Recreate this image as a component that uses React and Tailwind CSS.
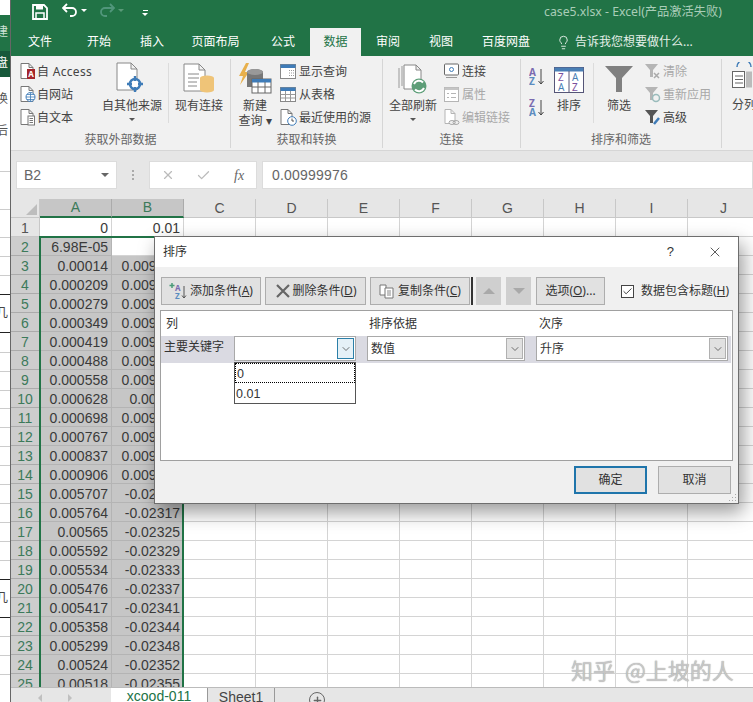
import { ChevronDown, X, Check, Plus, Lightbulb } from 'lucide-react';

const COLS = ['A', 'B', 'C', 'D', 'E', 'F', 'G', 'H', 'I', 'J'];
const COL_A = ['0', '6.98E-05', '0.00014', '0.000209', '0.000279', '0.000349', '0.000419', '0.000488', '0.000558', '0.000628', '0.000698', '0.000767', '0.000837', '0.000906', '0.005707', '0.005764', '0.00565', '0.005592', '0.005534', '0.005476', '0.005417', '0.005358', '0.005299', '0.00524', '0.00518'];
const COL_B = ['0.01', '', '0.009998', '0.009993', '0.009988', '0.009983', '0.009978', '0.009973', '0.009968', '0.00996', '0.009958', '0.009953', '0.009948', '0.009943', '-0.02313', '-0.02317', '-0.02325', '-0.02329', '-0.02333', '-0.02337', '-0.02341', '-0.02344', '-0.02348', '-0.02352', '-0.02355'];

const tabs = [
  ['文件', 'w-[58px]'],
  ['开始', 'w-[60px]'],
  ['插入', 'w-[46px]'],
  ['页面布局', 'w-[81px]'],
  ['公式', 'w-[54px]'],
  ['数据', 'w-[51px]', true],
  ['审阅', 'w-[54px]'],
  ['视图', 'w-[52px]'],
  ['百度网盘', 'w-[78px]'],
];

// lines of the window behind Excel, seen in the strip on the left
const STRIP_ROWS = [
  ['h-[15px]', 'border-[#ccc]'],
  ['h-[38px]', 'border-[#ccc]'],
  ['h-[28px]', 'border-[#ccc]'],
  ['h-[19px]', 'border-[#ccc]'],
  ['h-[19px]', 'border-[#ccc]'],
  ['h-[19px]', 'border-[#222]'],
  ['h-[38px]', 'border-[#222]', '几', 'pt-[12px]'],
  ['h-[20px]', 'border-[#ccc]'],
  ['h-[19px]', 'border-[#ccc]'],
  ['h-[19px]', 'border-[#ccc]'],
  ['h-[18px]', 'border-[#ccc]'],
  ['h-[19px]', 'border-[#ccc]'],
  ['h-[19px]', 'border-[#ccc]'],
  ['h-[19px]', 'border-[#ccc]'],
  ['h-[19px]', 'border-[#ccc]'],
  ['h-[19px]', 'border-[#ccc]'],
  ['h-[19px]', 'border-[#ccc]'],
  ['h-[19px]', 'border-[#ccc]'],
  ['h-[19px]', 'border-[#ccc]'],
  ['h-[19px]', 'border-[#222]'],
  ['h-[38px]', 'border-[#222]', '几', 'pt-[12px]'],
  ['h-[19px]', 'border-[#ccc]'],
  ['h-[19px]', 'border-[#ccc]'],
  ['h-[19px]', 'border-[#ccc]'],
];

const Doc = ({ x = 1, y = 0, w = 12, h = 16, fold = 4, stroke = '#777' }) => (
  <path d={`M${x} ${y}h${w - fold}l${fold} ${fold}v${h - fold}h-${w}zM${x + w - fold} ${y}v${fold}h${fold}`} fill="#fff" stroke={stroke} />
);

const Caret = () => <div className="w-0 h-0 border-x-[3px] border-x-transparent border-t-[3px] border-t-[#555] mt-[5px]" />;

const SmallBtn = ({ icon, label, muted, tight }) => (
  <div className="flex items-center h-[23px] whitespace-nowrap">
    <div className="w-[17px] h-[17px] shrink-0">{icon}</div>
    <span className={`text-[12px] ${tight ? 'ml-0' : 'ml-[2px]'} ${muted ? 'text-[#a8a8a8]' : 'text-[#444]'}`}>{label}</span>
  </div>
);

const BigBtn = ({ icon, lines, caret, width }) => (
  <div className={`flex flex-col items-center shrink-0 ${width}`}>
    <div className="h-[36px] mt-[2px] flex items-center justify-center">{icon}</div>
    {lines.map((l) => (
      <div key={l} className="text-[12px] leading-[15px] text-[#444] whitespace-nowrap">{l}</div>
    ))}
    {caret && <Caret />}
  </div>
);

const Group = ({ width, label, children }) => (
  <div className={`${width} shrink-0 flex flex-col border-r border-[#d6d6d6] my-[3px] h-[89px]`}>
    <div className="h-[73px] flex pt-[1px]">{children}</div>
    <div className="text-center text-[12px] leading-[16px] text-[#666]">{label}</div>
  </div>
);

const icons = {
  access: (
    <svg viewBox="0 0 17 17" className="w-[17px] h-[17px]"><Doc x={1} y={0.5} w={12} h={15} /><rect x="7" y="6" width="8" height="10" fill="#a4262c" /><text x="8.3" y="14" fontSize="8" fill="#fff" fontWeight="700">A</text></svg>
  ),
  web: (
    <svg viewBox="0 0 17 17" className="w-[17px] h-[17px]"><Doc x={1} y={0.5} w={12} h={15} /><circle cx="10.5" cy="11" r="4.5" fill="#fff" stroke="#3f7cb8" /><path d="M6 11h9M10.5 6.5v9M7 8.5h7M7 13.5h7" stroke="#3f7cb8" strokeWidth=".8" /></svg>
  ),
  text: (
    <svg viewBox="0 0 17 17" className="w-[17px] h-[17px]"><Doc x={1} y={0.5} w={12} h={15} /><rect x="8" y="7" width="6.5" height="9" fill="#fff" stroke="#777" /><path d="M9.5 9.5h3.5M9.5 11.5h3.5M9.5 13.5h3.5" stroke="#777" /></svg>
  ),
  other: (
    <svg width="32" height="36" viewBox="0 0 32 36"><Doc x={1} y={1} w={20} h={27} fold={6} stroke="#888" /><circle cx="19" cy="22" r="5" fill="#fff" stroke="#3f7cb8" strokeWidth="2.6" /><path d="M19 14v5M19 25v5M11 22h5M22 22h5" stroke="#3f7cb8" strokeWidth="2.4" /></svg>
  ),
  existing: (
    <svg width="32" height="34" viewBox="0 0 32 34"><Doc x={1} y={1} w={21} h={27} fold={6} stroke="#888" /><path d="M5 11h11M5 15h11M5 19h9M5 23h9" stroke="#888" /><path d="M17 15a7 2.5 0 0 1 14 0v12a7 2.5 0 0 1-14 0z" fill="#efc478" /></svg>
  ),
  newQuery: (
    <svg width="34" height="34" viewBox="0 0 34 34"><path d="M8 0L1 13h4l-3 9 9-13H7l4-9z" fill="#e8b04c" /><path d="M9 9a8 3 0 0 1 16 0v15H9z" fill="#777" /><ellipse cx="17" cy="9" rx="8" ry="3" fill="#999" /><rect x="14" y="16" width="19" height="14" fill="#fff" stroke="#666" /><rect x="14" y="16" width="19" height="3.5" fill="#3f7cb8" /><path d="M14 24h19M20 19v11M27 19v11" stroke="#666" /></svg>
  ),
  showQuery: (
    <svg viewBox="0 0 17 17" className="w-[17px] h-[17px]"><rect x=".5" y="1.5" width="15" height="14" fill="#fff" stroke="#888" /><rect x=".5" y="1.5" width="15" height="3.5" fill="#3f7cb8" /><path d="M9 7.5h5M9 10h5M9 12.5h5" stroke="#999" strokeDasharray="1 1" /></svg>
  ),
  fromTable: (
    <svg viewBox="0 0 17 17" className="w-[17px] h-[17px]"><rect x=".5" y="1.5" width="15" height="14" fill="#fff" stroke="#888" /><rect x=".5" y="1.5" width="15" height="3.5" fill="#3f7cb8" /><path d="M1 8.5h14M1 12h14M5.5 5v10M10.5 5v10" stroke="#999" /></svg>
  ),
  recent: (
    <svg viewBox="0 0 17 17" className="w-[17px] h-[17px]"><Doc x={1} y={0.5} w={11} h={15} /><circle cx="12" cy="12" r="4.3" fill="#fff" stroke="#3f7cb8" /><path d="M12 9.5V12h2" fill="none" stroke="#555" /></svg>
  ),
  refresh: (
    <svg width="32" height="32" viewBox="0 0 32 32"><path d="M2 4v20M5 2v20" stroke="#999" fill="none" /><Doc x={7} y={1} w={17} h={24} fold={5} stroke="#888" /><circle cx="22" cy="22" r="7.5" fill="#5d9e78" /><path d="M17 20a5.5 5.5 0 0 1 9-1.5M27 24a5.5 5.5 0 0 1-9 1.5" stroke="#fff" strokeWidth="2" fill="none" /></svg>
  ),
  conn: (
    <svg viewBox="0 0 17 17" className="w-[17px] h-[17px]"><rect x="1.5" y="1" width="14" height="11" rx="1" fill="#fff" stroke="#666" /><circle cx="8.5" cy="6.5" r="2" fill="none" stroke="#3f7cb8" /><path d="M3 14.5h11" stroke="#999" /></svg>
  ),
  props: (
    <svg viewBox="0 0 17 17" className="w-[17px] h-[17px]"><rect x="1.5" y="1.5" width="14" height="14" fill="#fff" stroke="#b5b5b5" /><rect x="1.5" y="1.5" width="14" height="2.5" fill="#c5c5c5" /><path d="M4 7.5h2M8 7.5h5M4 11.5h2M8 11.5h5" stroke="#b5b5b5" /></svg>
  ),
  link: (
    <svg viewBox="0 0 17 17" className="w-[17px] h-[17px]"><Doc x={2} y={0.5} w={10} h={14} stroke="#b5b5b5" /><ellipse cx="9" cy="13.5" rx="3" ry="2" fill="#f1f1f1" stroke="#aaa" /><ellipse cx="13" cy="13.5" rx="3" ry="2" fill="none" stroke="#aaa" /></svg>
  ),
  az: (
    <svg width="16" height="20" viewBox="0 0 16 20"><text x="0" y="9" fontSize="10" fontWeight="700" fill="#7a6bb0">A</text><text x="0" y="18" fontSize="10" fontWeight="700" fill="#5b8cc0">Z</text><path d="M12 2v15M9.5 14l2.500 3 2.500-3" fill="none" stroke="#444" /></svg>
  ),
  za: (
    <svg width="16" height="20" viewBox="0 0 16 20"><text x="0" y="9" fontSize="10" fontWeight="700" fill="#7a6bb0">Z</text><text x="0" y="18" fontSize="10" fontWeight="700" fill="#5b8cc0">A</text><path d="M12 2v15M9.5 14l2.500 3 2.500-3" fill="none" stroke="#444" /></svg>
  ),
  sort: (
    <svg width="30" height="26" viewBox="0 0 30 26"><rect x=".5" y=".5" width="29" height="25" fill="#fff" stroke="#557" /><rect x=".5" y=".5" width="29" height="4" fill="#4a7fb5" /><path d="M15 4v22" stroke="#557" /><text x="4" y="14" fontSize="10" fill="#7a4f9e">Z</text><text x="4" y="24" fontSize="10" fill="#4a7fb5">A</text><text x="18" y="14" fontSize="10" fill="#4a7fb5">A</text><text x="18" y="24" fontSize="10" fill="#7a4f9e">Z</text></svg>
  ),
  filter: (
    <svg width="28" height="28" viewBox="0 0 28 28"><path d="M0 0h28L17 12v14h-6V12z" fill="#808080" /></svg>
  ),
  clear: (
    <svg viewBox="0 0 17 17" className="w-[17px] h-[17px]"><path d="M1 1h13L9 7v7H6V7z" fill="#b5b5b5" /><path d="M10 10l5 5M15 10l-5 5" stroke="#aaa" strokeWidth="1.5" /></svg>
  ),
  reapply: (
    <svg viewBox="0 0 17 17" className="w-[17px] h-[17px]"><path d="M1 1h13L9 7v7H6V7z" fill="#b5b5b5" /><circle cx="12" cy="12" r="3.5" fill="none" stroke="#9bb" strokeWidth="1.5" /></svg>
  ),
  advanced: (
    <svg viewBox="0 0 17 17" className="w-[17px] h-[17px]"><path d="M1 1h13L9 7v7H6V7z" fill="#555" /><path d="M10 15l5-6" stroke="#3f7cb8" strokeWidth="2.5" /></svg>
  ),
  split: (
    <svg width="20" height="30" viewBox="0 0 20 30"><path d="M5 5a7 7 0 0 1 14 0" fill="none" stroke="#3f7cb8" strokeWidth="1.5" /><rect x=".5" y="9.5" width="12" height="16" fill="#fff" stroke="#666" /><path d="M3 14h8M3 17.500h8M3 21h8" stroke="#666" /><rect x="14" y="9.5" width="6" height="16" fill="#bbb" /></svg>
  ),
};

const LeftStrip = () => (
  <div className="w-[11px] shrink-0 flex flex-col border-r border-[#666] overflow-hidden text-[12px] leading-none">
    <div className="h-[15px] bg-white shrink-0" />
    <div className="h-[36px] bg-[#217346] text-[#cfe3d6] shrink-0 pt-[11px] -indent-[4px]">建</div>
    <div className="h-[26px] bg-[#17583a] text-white shrink-0 pt-[6px] -indent-[4px]">盘</div>
    <div className="h-[80px] bg-white text-[#555] shrink-0 pt-[16px] -indent-[4px]">换<div className="mt-[20px]">后</div></div>
    {STRIP_ROWS.map(([h, line, text, pad], i) => (
      <div key={i} className={`${h} ${pad || ''} shrink-0 bg-white border-b ${line} -indent-[4px] text-[#444]`}>{text}</div>
    ))}
  </div>
);

const TitleBar = () => (
  <div className="h-[28px] bg-[#217346] flex items-center relative shrink-0">
    <svg width="16" height="16" viewBox="0 0 16 16" className="ml-[21px] mt-[-5px]">
      <path d="M1 1h11l3 3v11H1z" fill="none" stroke="#fff" strokeWidth="1.8" />
      <path d="M4 1.5h7v4H4z" fill="#fff" />
      <path d="M4 9h8v6H4z" fill="none" stroke="#fff" strokeWidth="1.5" />
    </svg>
    <svg width="16" height="14" viewBox="0 0 16 14" className="ml-[14px] mt-[-8px]">
      <path d="M5 1L1 5l4 4M1.5 5H10a4 4 0 0 1 0 8H8" fill="none" stroke="#fff" strokeWidth="1.8" />
    </svg>
    <div className="ml-[3px] mt-[-8px] w-0 h-0 border-x-[3px] border-x-transparent border-t-[3px] border-t-white" />
    <svg width="16" height="14" viewBox="0 0 16 14" className="ml-[12px] mt-[-8px] opacity-40">
      <path d="M11 1l4 4-4 4M14.5 5H6a4 4 0 0 0 0 8h2" fill="none" stroke="#9cc" strokeWidth="1.8" />
    </svg>
    <div className="ml-[3px] mt-[-8px] w-0 h-0 border-x-[3px] border-x-transparent border-t-[3px] border-t-[#5a9a78]" />
    <div className="ml-[18px] mt-[-3px] flex flex-col items-center gap-[2px]">
      <div className="w-[5px] h-px bg-white" />
      <div className="w-0 h-0 border-x-[3px] border-x-transparent border-t-[3px] border-t-white" />
    </div>
    <div className="ml-auto mr-[31px] mt-[-3px] text-[12.25px] text-[#a9cdb8] whitespace-nowrap">case5.xlsx - Excel(产品激活失败)</div>
  </div>
);

const TabBar = () => (
  <div className="h-[28px] bg-[#217346] flex shrink-0 text-[12px]">
    {tabs.map(([t, w, active]) => (
      <div key={t} className={`${w} flex items-center justify-center shrink-0 ${active ? 'bg-[#f1f1f1] text-[#217346]' : 'text-white'}`}>{t}</div>
    ))}
    <div className="flex items-center ml-[11px] text-[#e4efe8] whitespace-nowrap">
      <Lightbulb size={15} strokeWidth={1.5} />
      <span className="ml-[4px]">告诉我您想要做什么...</span>
    </div>
  </div>
);

const Ribbon = () => (
  <div className="h-[95px] bg-[#f1f1f1] flex shrink-0 border-b border-[#d6d6d6] overflow-hidden">
    <Group width="w-[220px]" label="获取外部数据">
      <div className="ml-[9px] w-[76px] shrink-0">
        <SmallBtn tight icon={icons.access} label={<span className="tracking-[0.3px]">自 Access</span>} />
        <SmallBtn tight icon={icons.web} label="自网站" />
        <SmallBtn tight icon={icons.text} label="自文本" />
      </div>
      <BigBtn icon={icons.other} lines={['自其他来源']} caret width="w-[72px]" />
      <div className="w-px h-[60px] bg-[#dcdcdc] mt-[3px] shrink-0" />
      <BigBtn icon={icons.existing} lines={['现有连接']} width="w-[60px]" />
    </Group>
    <Group width="w-[152px]" label="获取和转换">
      <BigBtn icon={icons.newQuery} lines={['新建', '查询 ▾']} width="w-[48px]" />
      <div className="ml-[1px]">
        <SmallBtn icon={icons.showQuery} label="显示查询" />
        <SmallBtn icon={icons.fromTable} label="从表格" />
        <SmallBtn icon={icons.recent} label="最近使用的源" />
      </div>
    </Group>
    <Group width="w-[138px]" label="连接">
      <BigBtn icon={icons.refresh} lines={['全部刷新']} caret width="w-[60px]" />
      <div>
        <SmallBtn icon={icons.conn} label="连接" />
        <SmallBtn icon={icons.props} label="属性" muted />
        <SmallBtn icon={icons.link} label="编辑链接" muted />
      </div>
    </Group>
    <Group width="w-[201px]" label="排序和筛选">
      <div className="ml-[8px] w-[24px] shrink-0 flex flex-col gap-[11px] pt-[7px]">
        {icons.az}
        {icons.za}
      </div>
      <BigBtn icon={icons.sort} lines={['排序']} width="w-[32px]" />
      <div className="w-px h-[60px] bg-[#dcdcdc] mt-[3px] ml-[8px] shrink-0" />
      <BigBtn icon={icons.filter} lines={['筛选']} width="w-[50px]" />
      <div>
        <SmallBtn icon={icons.clear} label="清除" muted />
        <SmallBtn icon={icons.reapply} label="重新应用" muted />
        <SmallBtn icon={icons.advanced} label="高级" />
      </div>
    </Group>
    <div className="pl-[10px] pt-[6px] shrink-0">
      {icons.split}
      <div className="text-[12px] text-[#444] mt-[4px] whitespace-nowrap">分列</div>
    </div>
  </div>
);

const FormulaBar = () => (
  <div className="h-[48px] bg-[#e6e6e6] shrink-0 flex pt-[10px] pb-[10px] font-['Liberation_Sans','Noto_Sans_CJK_SC',sans-serif] text-[#666]">
    <div className="ml-[5px] w-[101px] bg-white flex items-center px-[7px] text-[14px] border border-[#dcdcdc]">
      B2
      <div className="ml-auto w-0 h-0 border-x-[4px] border-x-transparent border-t-[4px] border-t-[#666]" />
    </div>
    <div className="w-[32px] flex flex-col items-center justify-center gap-[2px]">
      <div className="w-[2px] h-[2px] bg-[#aaa]" />
      <div className="w-[2px] h-[2px] bg-[#aaa]" />
      <div className="w-[2px] h-[2px] bg-[#aaa]" />
    </div>
    <div className="w-[108px] bg-white border border-[#dcdcdc] flex items-center text-[#bbb]">
      <X size={14} className="ml-[11px]" />
      <Check size={15} className="ml-[21px]" />
      <span className="ml-[23px] font-['Liberation_Serif',serif] italic text-[14px] text-[#666]">fx</span>
    </div>
    <div className="ml-[5px] flex-1 bg-white border border-[#dcdcdc] flex items-center px-[9px] text-[14px] tracking-[0.2px]">0.00999976</div>
  </div>
);

const Sheet = () => (
  <div className="flex-1 relative overflow-hidden bg-white font-['Liberation_Sans',sans-serif] text-[14px]">
    <div className="flex h-[19px]">
      <div className="w-[29px] shrink-0 bg-[#e6e6e6] border-r border-b border-[#c8c8c8] relative">
        <div className="absolute right-[2px] bottom-[2px] w-0 h-0 border-l-[11px] border-l-transparent border-b-[11px] border-b-[#bdbdbd]" />
      </div>
      {COLS.map((c, i) => (
        <div
          key={c}
          className={`w-[72px] shrink-0 flex items-center justify-center border-r ${i < 2 ? 'bg-[#c6c6c6] text-[#3c7a5a] border-b-2 border-b-[#217346] border-r-[#ababab]' : 'bg-[#e6e6e6] text-[#555] border-b border-[#c8c8c8]'}`}
        >
          {c}
        </div>
      ))}
    </div>
    {COL_A.map((a, i) => {
      const selected = i > 0;
      const active = i === 1;
      return (
        <div key={i} className="flex h-[19px]">
          <div className={`w-[29px] shrink-0 flex items-center justify-center pt-[2px] border-r border-b ${selected ? 'bg-[#cdcdcd] text-[#3c7a5a] border-[#ababab]' : 'bg-[#e6e6e6] text-[#555] border-[#c8c8c8]'}`}>{i + 1}</div>
          <div className={`w-[72px] shrink-0 flex items-center justify-end pt-[2px] pr-[3px] border-r border-b text-[#3a3a3a] ${selected ? 'bg-[#c6c6c6] border-[#b4b4b4]' : 'bg-white border-[#d4d4d4]'}`}>{a}</div>
          <div className={`w-[72px] shrink-0 flex items-center justify-end pt-[2px] pr-[3px] border-r border-b text-[#3a3a3a] ${selected && !active ? 'bg-[#c6c6c6] border-[#b4b4b4]' : 'bg-white border-[#d4d4d4]'}`}>{COL_B[i]}</div>
          {COLS.slice(2).map((c) => (
            <div key={c} className="w-[72px] shrink-0 border-r border-b border-[#d4d4d4]" />
          ))}
        </div>
      );
    })}
    <div className="absolute left-[28px] top-[37px] w-[145px] h-[480px] border-2 border-[#217346] pointer-events-none" />
  </div>
);

const SheetTabs = () => (
  <div className="h-[15px] shrink-0 bg-[#e6e6e6] flex overflow-hidden border-t border-[#bbb] font-['Liberation_Sans',sans-serif] text-[14px] relative">
    <div className="w-[100px] shrink-0 flex items-start pt-[6px] pl-[27px] gap-[26px]">
      <div className="w-0 h-0 border-y-[4px] border-y-transparent border-r-[4px] border-r-[#c0c0c0]" />
      <div className="w-0 h-0 border-y-[4px] border-y-transparent border-l-[4px] border-l-[#c0c0c0]" />
    </div>
    <div className="w-[96px] h-[24px] shrink-0 bg-white text-[#217346] text-center leading-[18px] -mt-px">xcood-011</div>
    <div className="w-[68px] h-[24px] shrink-0 border-l border-r border-[#999] text-[#444] text-center leading-[18px]">Sheet1</div>
    <div className="ml-[34px] mt-[4px] w-[16px] h-[16px] shrink-0 rounded-full border border-[#666] flex items-center justify-center text-[#666]">
      <Plus size={11} strokeWidth={3} />
    </div>
  </div>
);

const Combo = ({ value, width, focused }) => (
  <div className={`${width} h-[25px] shrink-0 bg-white border border-[#a9a9a9] flex items-center pl-[3px] text-[12px] text-[#333]`}>
    {value}
    <div className={`ml-auto mr-px w-[17px] h-[21px] flex items-center justify-center border ${focused ? 'bg-[#e5f1f7] border-[#2b7fa8]' : 'bg-[#e1e1e1] border-[#b0b0b0]'}`}>
      <ChevronDown size={12} strokeWidth={1.5} className="text-[#444]" />
    </div>
  </div>
);

const ToolBtn = ({ width, icon, children }) => (
  <div className={`${width} h-[28px] shrink-0 bg-[#e1e1e1] border border-[#adadad] flex items-center justify-center text-[12px] text-[#333] whitespace-nowrap`}>
    {icon}
    {children}
  </div>
);

const ArrowBtn = ({ up }) => (
  <div className="w-[25px] h-[28px] shrink-0 bg-[#cfcfcf] flex items-center justify-center">
    <div className={`w-0 h-0 border-x-[6px] border-x-transparent ${up ? 'border-b-[6px] border-b-[#a9a9a9]' : 'border-t-[6px] border-t-[#a9a9a9]'}`} />
  </div>
);

const SortDialog = () => (
  <div className="absolute left-[154px] top-[236px] w-[585px] h-[268px] bg-[#f0f0f0] border border-[#6e6e6e] shadow-[4px_8px_18px_rgba(0,0,0,0.4)] flex flex-col text-[#333] text-[12px]">
    <div className="h-[30px] bg-white flex items-center shrink-0 pl-[8px]">
      <span className="text-[12px]">排序</span>
      <span className="ml-auto text-[13px] text-[#333] font-['Liberation_Sans',sans-serif] mr-[33px]">?</span>
      <X size={16} strokeWidth={1.2} className="mr-[15px]" />
    </div>
    <div className="flex items-center h-[28px] mt-[10px] ml-[6px] shrink-0">
      <ToolBtn
        width="w-[100px]"
        icon={
          <svg width="20" height="20" viewBox="0 0 20 20" className="mr-[1px]">
            <path d="M3 2v5M.5 4.5h5" stroke="#4a9a78" strokeWidth="1.5" />
            <text x="6" y="10" fontSize="8" fontWeight="700" fill="#7a6bb0">A</text>
            <text x="6" y="18" fontSize="8" fontWeight="700" fill="#5b8cc0">Z</text>
            <path d="M15 5v12M13 14.5l2 2.5 2-2.5" fill="none" stroke="#555" />
          </svg>
        }
      >
        添加条件(<span className="underline">A</span>)
      </ToolBtn>
      <ToolBtn
        width="w-[101px] ml-[4px]"
        icon={
          <svg width="16" height="16" viewBox="0 0 16 16" className="mr-[2px]">
            <path d="M2 2l12 12M14 2L2 14" stroke="#666" strokeWidth="2.2" />
          </svg>
        }
      >
        删除条件(<span className="underline">D</span>)
      </ToolBtn>
      <ToolBtn
        width="w-[100px] ml-[4px]"
        icon={
          <svg width="16" height="15" viewBox="0 0 16 15" className="mr-[3px]">
            <path d="M1 1h6v10H1z" fill="#fff" stroke="#777" />
            <path d="M6 4h8v10H6z" fill="#fff" stroke="#777" />
            <path d="M8 7h4M8 9h4M8 11h4" stroke="#888" />
          </svg>
        }
      >
        复制条件(<span className="underline">C</span>)
      </ToolBtn>
      <div className="w-[2px] h-[28px] bg-[#333] ml-[1px] mr-[3px] shrink-0" />
      <ArrowBtn up />
      <div className="w-[5px] shrink-0" />
      <ArrowBtn />
      <ToolBtn width="w-[69px] ml-[5px]">
        选项(<span className="underline">O</span>)...
      </ToolBtn>
      <div className="ml-[16px] w-[13px] h-[13px] bg-white border border-[#444] flex items-center justify-center shrink-0">
        <Check size={11} strokeWidth={2} className="text-[#333]" />
      </div>
      <span className="ml-[7px] whitespace-nowrap">数据包含标题(<span className="underline">H</span>)</span>
    </div>
    <div className="relative mx-[5px] mt-[5px] h-[151px] bg-white border border-[#a0a0a0] shrink-0">
      <div className="flex h-[25px] items-center">
        <span className="ml-[5px] w-[203px] shrink-0">列</span>
        <span className="w-[170px] shrink-0">排序依据</span>
        <span>次序</span>
      </div>
      <div className="flex h-[27px] bg-[#dadae2] mr-[1px] items-start">
        <span className="ml-[3px] w-[70px] shrink-0 pt-[2px]">主要关键字</span>
        <Combo width="w-[122px]" focused />
        <div className="w-[11px] shrink-0" />
        <Combo value="数值" width="w-[158px]" />
        <div className="w-[11px] shrink-0" />
        <Combo value="升序" width="w-[192px]" />
      </div>
      <div className="absolute left-[73px] top-[51px] w-[122px] h-[42px] bg-white border border-[#555] font-['Liberation_Sans',sans-serif] text-[12.5px] text-[#333]">
        <div className="h-[20px] border border-dotted border-black flex items-center pt-[2px] pl-[1px]">0</div>
        <div className="h-[20px] flex items-center pt-[2px] pl-[1px]">0.01</div>
      </div>
    </div>
    <div className="flex mt-[5px] ml-[419px] shrink-0">
      <div className="w-[73px] h-[28px] bg-[#e1e1e1] border-2 border-[#1f75ab] flex items-center justify-center">确定</div>
      <div className="w-[73px] h-[28px] ml-[11px] bg-[#e1e1e1] border border-[#adadad] flex items-center justify-center">取消</div>
    </div>
    <svg width="9" height="9" viewBox="0 0 9 9" className="absolute right-[1px] bottom-[1px]">
      <path d="M7 1h1v1H7zM4 4h1v1H4zM7 4h1v1H7zM1 7h1v1H1zM4 7h1v1H4zM7 7h1v1H7z" fill="#aaa" />
    </svg>
  </div>
);

export default function App() {
  return (
    <div className="relative w-[753px] h-[702px] overflow-hidden flex bg-white font-['Noto_Sans','Noto_Sans_CJK_SC',sans-serif]">
      <LeftStrip />
      <div className="flex-1 min-w-0 flex flex-col">
        <TitleBar />
        <TabBar />
        <Ribbon />
        <FormulaBar />
        <Sheet />
        <SheetTabs />
      </div>
      <SortDialog />
      <div className="absolute left-[571px] top-[654px] flex items-center text-[22px] leading-[30px] text-[#d4d4d4]/80 font-['Noto_Sans_CJK_SC',sans-serif] whitespace-nowrap [text-shadow:0_0_1px_#888]">
        <span>知乎</span>
        <span className="ml-[10px]">@上坡的人</span>
      </div>
    </div>
  );
}
